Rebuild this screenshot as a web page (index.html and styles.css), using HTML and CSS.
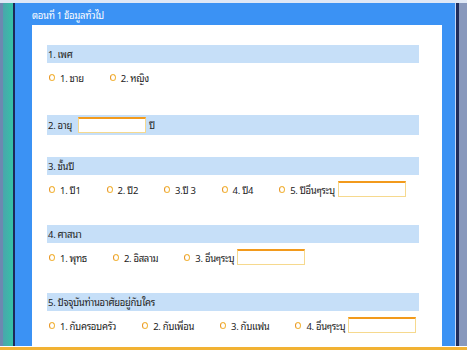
FILE: index.html
```html
<!DOCTYPE html>
<html>
  <head>
    <meta charset="utf-8">
    <title>แบบสอบถาม</title>
    <link rel="stylesheet" href="styles.css">
  </head>
  <body>
    <div class="screen">
      <div class="topline"></div>
      <div class="middle">
        <div class="side-left"></div>
        <div class="frame">
          <div class="head">ตอนที่ 1 ข้อมูลทั่วไป</div>
          <div class="panel">
            <div class="q">
              <div class="q-title">1. เพศ</div>
              <div class="opts">
                <label class="opt"><span class="radio"></span>1. ชาย</label>
                <label class="opt"><span class="radio"></span>2. หญิง</label>
              </div>
            </div>
            <div class="q">
              <div class="q-title tall">2. อายุ <span class="box"></span> ปี</div>
            </div>
            <div class="q">
              <div class="q-title">3. ชั้นปี</div>
              <div class="opts">
                <label class="opt"><span class="radio"></span>1. ปี1</label>
                <label class="opt"><span class="radio"></span>2. ปี2</label>
                <label class="opt"><span class="radio"></span>3.ปี 3</label>
                <label class="opt"><span class="radio"></span>4. ปี4</label>
                <label class="opt"><span class="radio"></span>5. ปีอื่นๆระบุ <span class="box"></span></label>
              </div>
            </div>
            <div class="q">
              <div class="q-title">4. ศาสนา</div>
              <div class="opts">
                <label class="opt"><span class="radio"></span>1. พุทธ</label>
                <label class="opt"><span class="radio"></span>2. อิสลาม</label>
                <label class="opt"><span class="radio"></span>3. อื่นๆระบุ <span class="box"></span></label>
              </div>
            </div>
            <div class="q">
              <div class="q-title">5. ปัจจุบันท่านอาศัยอยู่กับใคร</div>
              <div class="opts">
                <label class="opt"><span class="radio"></span>1. กับครอบครัว</label>
                <label class="opt"><span class="radio"></span>2. กับเพื่อน</label>
                <label class="opt"><span class="radio"></span>3. กับแฟน</label>
                <label class="opt"><span class="radio"></span>4. อื่นๆระบุ <span class="box"></span></label>
              </div>
            </div>
          </div>
        </div>
        <div class="side-right"></div>
      </div>
      <div class="bottomline"></div>
    </div>
  </body>
</html>
```

FILE: styles.css
```css
* { box-sizing: border-box; }
body {
  margin: 0;
  font-family: "Noto Sans Thai Looped", "Noto Sans Thai", sans-serif;
  font-stretch: condensed;
  font-size: 9.5px;
  letter-spacing: -0.3px;
  color: #222;
  overflow: hidden;
}
.screen {
  display: flex;
  flex-direction: column;
  height: 100vh;
}
.topline {
  height: 3px;
  background: #dfe8f6;
}
.middle {
  flex: 1;
  display: flex;
  min-height: 0;
}
.side-left {
  flex: none;
  width: 15px;
  background: linear-gradient(to right, #6d88b0 0 3px, #4aa6ac 3px, #35c2a6 13px);
  border-right: 2px solid #1c2a5a;
}
.frame {
  flex: 1;
  min-width: 0;
  display: flex;
  flex-direction: column;
  background: #3b92f4;
  padding: 0 13px 0 17px;
}
.head {
  height: 22px;
  line-height: 24px;
  color: #fff;
  white-space: nowrap;
}
.panel {
  flex: 1;
  background: #fff;
  padding: 20px 23px 0 15px;
  overflow: hidden;
}
.q {
  margin-bottom: 22px;
}
.q:first-child {
  margin-bottom: 24px;
}
.q-title {
  height: 18px;
  line-height: 18px;
  padding-left: 1px;
  background: #c6dff8;
  display: flex;
  align-items: center;
  gap: 3px;
  white-space: nowrap;
}
.q-title.tall {
  height: 20px;
}
.opts {
  height: 28px;
  display: flex;
  align-items: center;
  gap: 26px;
  padding-left: 2px;
  white-space: nowrap;
}
.opt {
  display: flex;
  align-items: center;
  flex: none;
}
.radio {
  flex: none;
  width: 6px;
  height: 7px;
  border: 1.5px solid #f2b53e;
  border-left-color: #e8951f;
  border-radius: 50%;
  margin-right: 5px;
}
.box {
  flex: none;
  display: inline-block;
  width: 68px;
  height: 16px;
  background: #fff;
  border: 1px solid #f6d98e;
  border-top: 2px solid #f29a1c;
  margin-left: 3px;
}
.side-right {
  flex: none;
  width: 12px;
  background: #8898bc;
  border-left: 1px solid #c4d6f4;
  box-shadow: inset 3px 0 0 #1e2c5c;
}
.bottomline {
  height: 4px;
  background: #f2b233;
  border-top: 1px solid #fff;
}
```
